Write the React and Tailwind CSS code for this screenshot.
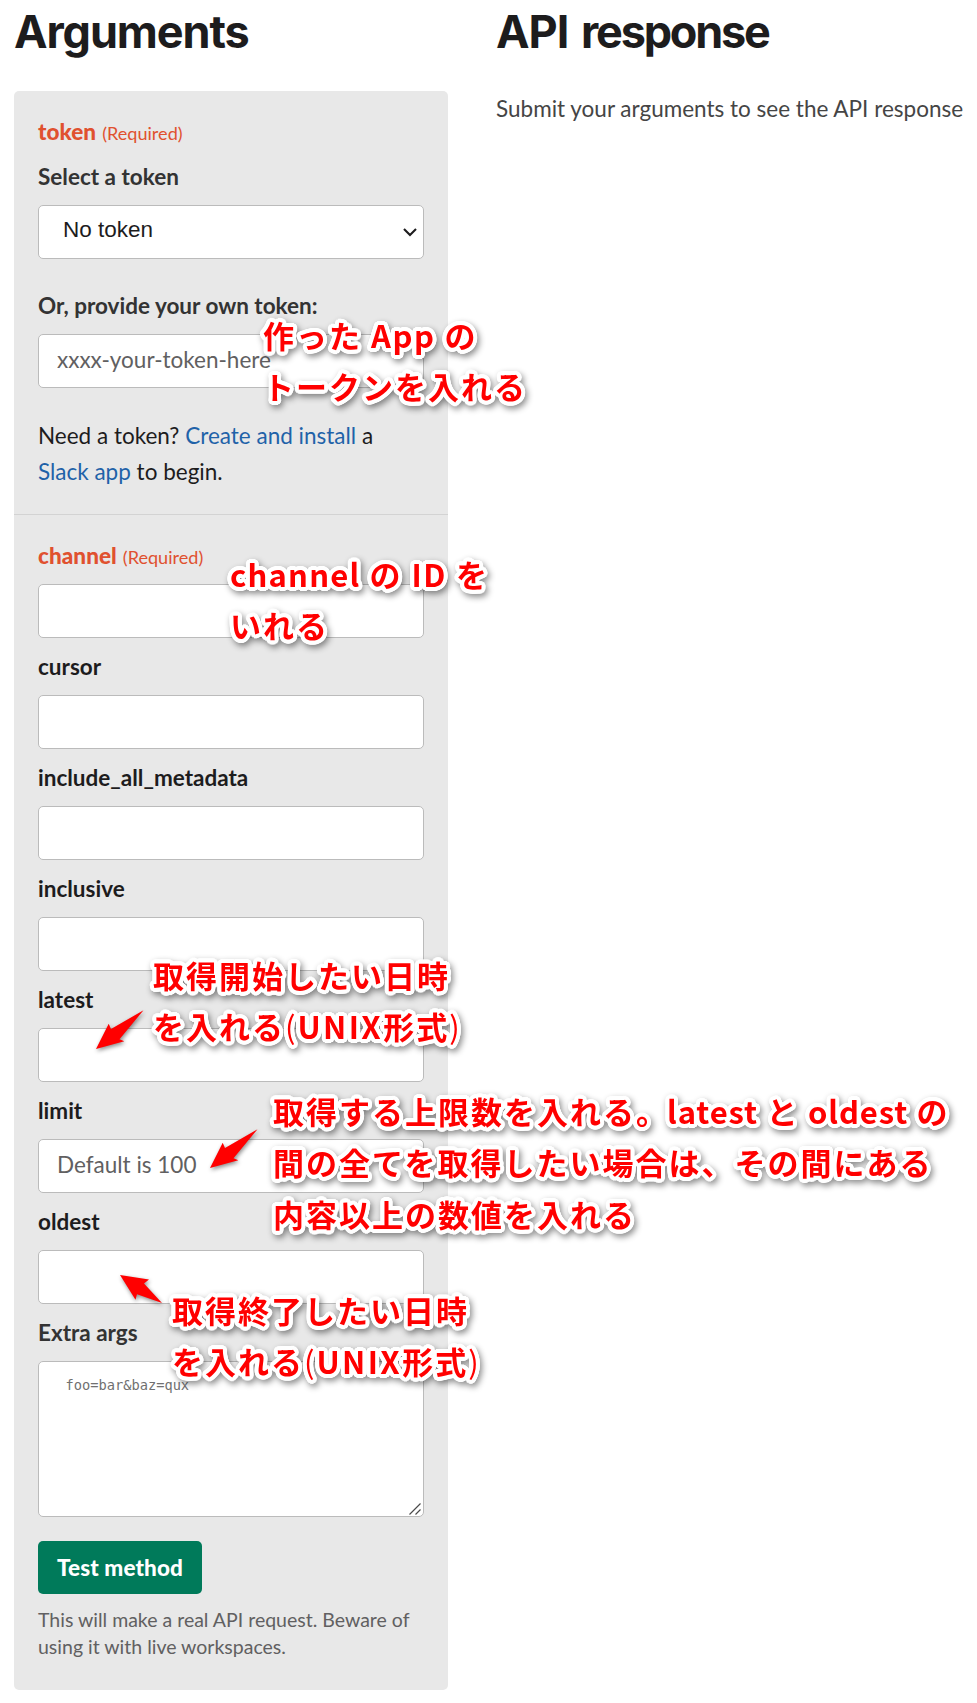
import React from 'react';

const fieldBox = 'block h-[54px] w-full rounded-[5px] border border-[#bbbbbb] bg-white';

// Solid white ring around the annotation glyphs, with round corners.
const ring = [4, 2.5]
  .flatMap((radius) =>
    Array.from({ length: 24 }, (_, i) => {
      const angle = (i * Math.PI) / 12;
      return `${(radius * Math.cos(angle)).toFixed(2)}px ${(radius * Math.sin(angle)).toFixed(2)}px 0 #fff`;
    }),
  )
  .join(', ');

function Label({ children, className = 'text-[#1d1c1d]' }) {
  return <div className={`h-9 pt-px text-[22.5px] leading-9 font-bold ${className}`}>{children}</div>;
}

function Required({ name }) {
  return (
    <div className="h-9 pt-px text-[22.5px] leading-9 text-[#e0512f]">
      <span className="font-black tracking-[0.05px]">{name}</span>
      <span className="ml-1.5 text-[18.1px]">(Required)</span>
    </div>
  );
}

function TextField({ placeholder }) {
  return (
    <input
      type="text"
      placeholder={placeholder}
      className={`${fieldBox} px-[18px] pb-[4px] text-[22.5px] placeholder:text-[#616061] placeholder:opacity-100`}
    />
  );
}

function Field({ name, placeholder }) {
  return (
    <div className="mt-[10px] flex flex-col gap-[11px]">
      <Label>{name}</Label>
      <TextField placeholder={placeholder} />
    </div>
  );
}

function Latin({ children, className = 'tracking-[0.9px]' }) {
  return <span className={className}>{children}</span>;
}

function Unix() {
  return (
    <>
      <span className="font-normal">(</span>
      <span className="tracking-[2.4px]">UNIX</span>形式<span className="font-normal">)</span>
    </>
  );
}

function Note({ className, children }) {
  return (
    <div
      style={{ textShadow: ring }}
      className={`absolute whitespace-nowrap font-['Noto_Sans_CJK_JP',sans-serif] text-[31px] leading-[51.4px] font-bold tracking-[2px] text-[#ff0000] drop-shadow-[2px_3px_3px_rgba(0,0,0,0.45)] ${className}`}
    >
      {children}
    </div>
  );
}

function Arrow({ className, points, width, height }) {
  return (
    <svg
      className={`absolute overflow-visible drop-shadow-[1px_2px_2px_rgba(0,0,0,0.45)] ${className}`}
      width={width}
      height={height}
      viewBox={`0 0 ${width} ${height}`}
      fill="#ff0000"
    >
      <polygon points={points} />
    </svg>
  );
}

const downLeft = '0,39 12.7,13.7 15,19 47.5,0.3 23.5,29.3 28.3,31.3';
const upLeft = '0,0 29,4.5 24,8.5 42,28 17,19.3 15.5,24.7';

export default function App() {
  return (
    <div className="relative h-[1703px] w-[977px] overflow-hidden bg-white font-[Lato,sans-serif] text-[22.5px] text-[#1d1c1d]">
      <div className="flex gap-12 pl-[14px]">
        <section className="w-[434px] shrink-0">
          <h1 className="mt-[7px] mb-[34px] h-[50px] font-[Inter,sans-serif] text-[45px] leading-[50px] font-bold tracking-[-1.1px]">
            Arguments
          </h1>
          <form className="h-[1599px] rounded-[5px] bg-[#e8e8e8]">
            <div className="h-[424px] border-b border-[#d3d3d3] px-6 pt-[22px]">
              <Required name="token" />
              <Label className="mt-[9px] text-[#333333]">Select a token</Label>
              <div className={`${fieldBox} mt-[11px] flex items-center justify-between pr-[6px] pl-[24px]`}>
                <span className="pb-[5px] font-['Liberation_Sans',sans-serif]">No token</span>
                <svg width="14" height="9" viewBox="0 0 14 9" fill="none" stroke="#1d1c1d" strokeWidth="2.1">
                  <path d="M1 1 7 7 13 1" />
                </svg>
              </div>
              <Label className="mt-7 mb-[11px] text-[#333333]">Or, provide your own token:</Label>
              <TextField placeholder="xxxx-your-token-here" />
              <p className="mt-[30px] leading-9">
                Need a token? <a className="text-[#1f62a8]">Create and install</a> a<br />
                <a className="text-[#1f62a8]">Slack app</a> to begin.
              </p>
            </div>
            <div className="px-6 pt-[22px]">
              <div className="flex flex-col gap-[11px]">
                <Required name="channel" />
                <TextField />
              </div>
              <Field name="cursor" />
              <Field name="include_all_metadata" />
              <Field name="inclusive" />
              <Field name="latest" />
              <Field name="limit" placeholder="Default is 100" />
              <Field name="oldest" />
              <Label className="mt-[10px] mb-[11px] text-[#333333]">Extra args</Label>
              <div className="relative">
                <textarea
                  placeholder="foo=bar&baz=qux"
                  className="block h-[156px] w-full resize-none rounded-[5px] border border-[#bbbbbb] bg-white px-[26.5px] pt-[15px] font-['DejaVu_Sans_Mono',monospace] text-[13.7px] leading-4 placeholder:text-[#707070] placeholder:opacity-100"
                />
                <svg
                  className="absolute right-[3px] bottom-[2px]"
                  width="12"
                  height="12"
                  viewBox="0 0 12 12"
                  fill="none"
                  stroke="#4a4a4a"
                  strokeWidth="1.2"
                >
                  <path d="M0.5 11.5 11.5 0.5M6.5 11.5 11.5 6.5" />
                </svg>
              </div>
              <button
                type="button"
                className="mt-6 block h-[53px] w-[164px] rounded-[5px] bg-[#007a5a] font-black tracking-[0.1px] text-white"
              >
                Test method
              </button>
              <p className="mt-3 text-[19.5px] leading-[27.2px] text-[#616061]">
                This will make a real API request. Beware of
                <br />
                using it with live workspaces.
              </p>
            </div>
          </form>
        </section>
        <section>
          <h1 className="mt-[7px] mb-[34px] h-[50px] font-[Inter,sans-serif] text-[45px] leading-[50px] font-bold tracking-[-2.2px] [word-spacing:3px] whitespace-nowrap">
            <span className="tracking-[-1px]">API </span>response
          </h1>
          <p className="leading-9 whitespace-nowrap text-[#454545]">Submit your arguments to see the API response</p>
        </section>
      </div>

      <Note className="top-[309px] left-[263px]">
        作った <Latin className="tracking-[1.5px]">App</Latin> の<br />
        トークンを入れる
      </Note>
      <Note className="top-[548px] left-[230px]">
        <Latin className="tracking-[1.2px]">channel</Latin> の <Latin className="tracking-[1.5px]">ID</Latin> を<br />
        いれる
      </Note>
      <Note className="top-[949px] left-[153px]">
        取得開始したい日時
        <br />
        を入れる
        <Unix />
      </Note>
      <Note className="top-[1085px] left-[273px] [word-spacing:-0.6px]">
        取得する上限数を入れる。<Latin className="-ml-[2px] tracking-[0.9px]">latest</Latin> と <Latin>oldest</Latin> の<br />
        間の全てを取得したい場合は、その間にある
        <br />
        内容以上の数値を入れる
      </Note>
      <Note className="top-[1284px] left-[172px]">
        取得終了したい日時
        <br />
        を入れる
        <Unix />
      </Note>

      <Arrow className="top-[1010px] left-[96px]" width={48} height={40} points={downLeft} />
      <Arrow className="top-[1129px] left-[210px]" width={48} height={40} points={downLeft} />
      <Arrow className="top-[1275px] left-[120px]" width={43} height={29} points={upLeft} />
    </div>
  );
}
